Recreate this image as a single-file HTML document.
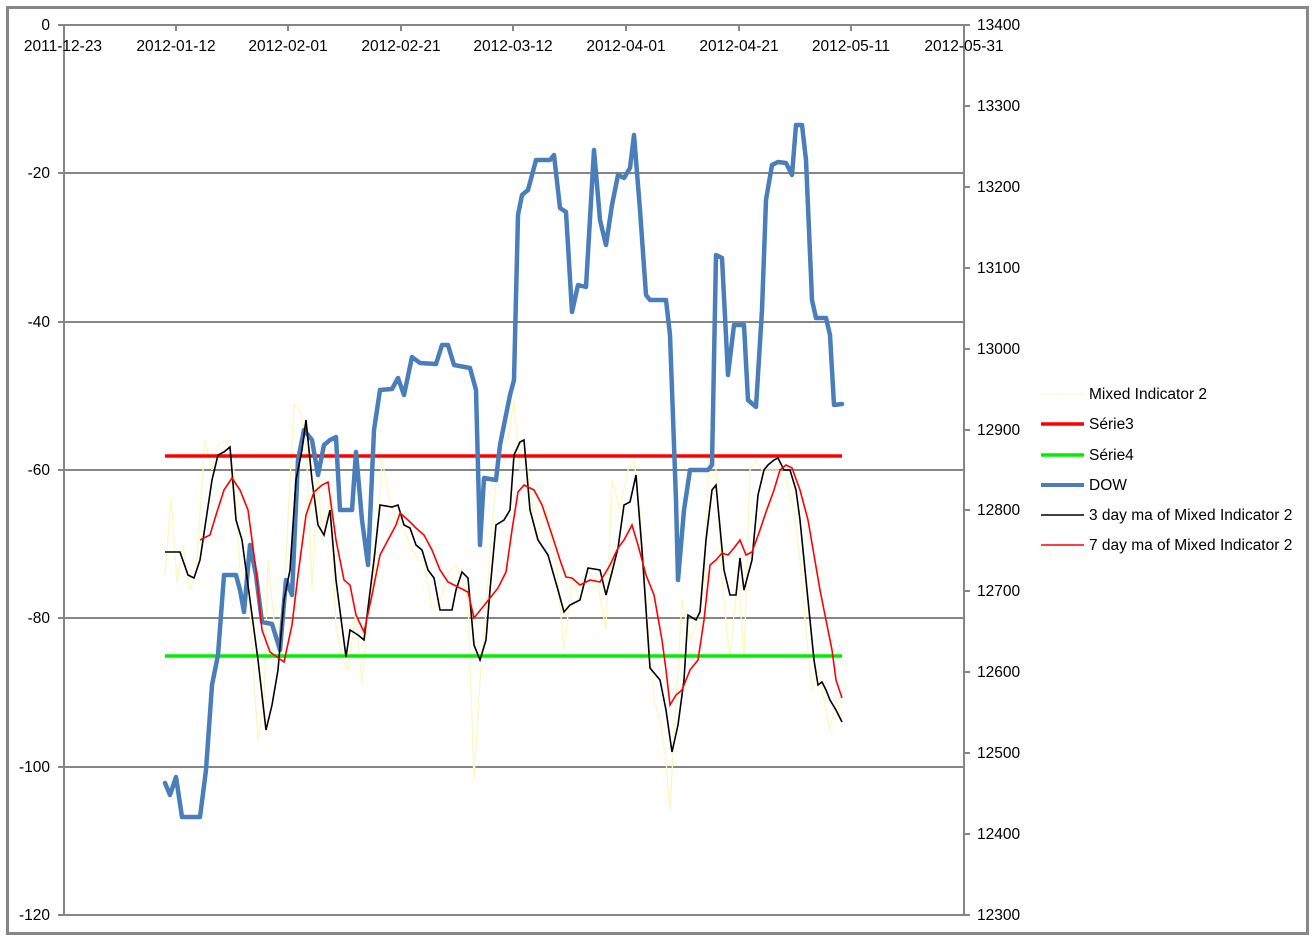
<!DOCTYPE html>
<html><head><meta charset="utf-8"><style>
html,body{margin:0;padding:0;background:#fff;}
svg{display:block;}
text{font-family:"Liberation Sans",sans-serif;font-size:15.5px;fill:#000;}
</style></head><body>
<svg width="1314" height="941" viewBox="0 0 1314 941">
<rect x="7.5" y="7.5" width="1300" height="926" fill="#fff" stroke="#868686" stroke-width="3"/>
<g stroke="#868686" stroke-width="2" fill="none">
<line x1="58" y1="25" x2="964" y2="25"/>
<line x1="58" y1="173" x2="964" y2="173"/>
<line x1="58" y1="322" x2="964" y2="322"/>
<line x1="58" y1="470" x2="964" y2="470"/>
<line x1="58" y1="618" x2="964" y2="618"/>
<line x1="58" y1="767" x2="964" y2="767"/>
<line x1="58" y1="915" x2="964" y2="915"/>
<line x1="64" y1="25" x2="64" y2="915"/>
<line x1="964" y1="25" x2="964" y2="915"/>
<line x1="176" y1="25" x2="176" y2="31"/><line x1="288" y1="25" x2="288" y2="31"/><line x1="401" y1="25" x2="401" y2="31"/><line x1="513" y1="25" x2="513" y2="31"/><line x1="626" y1="25" x2="626" y2="31"/><line x1="739" y1="25" x2="739" y2="31"/><line x1="851" y1="25" x2="851" y2="31"/>
<line x1="964" y1="25" x2="970" y2="25"/><line x1="964" y1="106" x2="970" y2="106"/><line x1="964" y1="187" x2="970" y2="187"/><line x1="964" y1="268" x2="970" y2="268"/><line x1="964" y1="349" x2="970" y2="349"/><line x1="964" y1="430" x2="970" y2="430"/><line x1="964" y1="510" x2="970" y2="510"/><line x1="964" y1="591" x2="970" y2="591"/><line x1="964" y1="672" x2="970" y2="672"/><line x1="964" y1="753" x2="970" y2="753"/><line x1="964" y1="834" x2="970" y2="834"/><line x1="964" y1="915" x2="970" y2="915"/>
</g>
<g text-anchor="end">
<text x="50" y="30">0</text><text x="50" y="178">-20</text><text x="50" y="327">-40</text><text x="50" y="475">-60</text><text x="50" y="623">-80</text><text x="50" y="772">-100</text><text x="50" y="920">-120</text>
</g>
<g>
<text x="977" y="30">13400</text><text x="977" y="111">13300</text><text x="977" y="192">13200</text><text x="977" y="273">13100</text><text x="977" y="354">13000</text><text x="977" y="435">12900</text><text x="977" y="515">12800</text><text x="977" y="596">12700</text><text x="977" y="677">12600</text><text x="977" y="758">12500</text><text x="977" y="839">12400</text><text x="977" y="920">12300</text>
</g>
<g text-anchor="middle">
<text x="63" y="51">2011-12-23</text><text x="176" y="51">2012-01-12</text><text x="288" y="51">2012-02-01</text><text x="401" y="51">2012-02-21</text><text x="513" y="51">2012-03-12</text><text x="626" y="51">2012-04-01</text><text x="739" y="51">2012-04-21</text><text x="851" y="51">2012-05-11</text><text x="964" y="51">2012-05-31</text>
</g>
<polyline fill="none" stroke="#fbf8c0" stroke-width="1.3" points="165,575 171,498 177,582 183,545 190,590 196,573 205,440 212,470 218,445 226,440 234,470 240,570 248,580 254,680 258,740 264,700 268,560 276,640 284,600 290,480 294,405 300,410 306,440 312,590 318,470 322,540 330,500 336,625 342,660 348,670 356,612 362,685 368,610 374,575 382,460 390,500 396,520 404,530 410,545 418,560 424,560 432,610 440,600 450,570 456,565 462,580 468,600 474,780 480,680 486,610 494,500 500,450 508,440 514,400 520,470 528,470 536,540 546,510 556,560 564,650 572,580 580,600 588,570 598,585 606,630 612,480 620,510 628,470 634,460 640,510 646,600 654,700 660,720 666,760 670,810 676,700 682,600 690,640 696,625 704,590 710,430 716,470 722,580 730,660 738,570 744,660 750,470 756,460 762,470 770,470 778,470 786,480 794,510 800,560 806,630 812,690 818,670 824,700 830,730 836,700 842,720"/>
<line x1="165" y1="456" x2="842" y2="456" stroke="#ff0000" stroke-width="3.5"/>
<line x1="165" y1="656" x2="842" y2="656" stroke="#00ee00" stroke-width="3.5"/>
<polyline fill="none" stroke="#4a7ebb" stroke-width="4.5" stroke-linejoin="round" stroke-linecap="round" points="165,783 170,795 176,777 182,817 200,817 206,770 212,685 218,655 224,575 236,575 240,590 244,612 250,545 256,575 262,622 272,624 280,650 286,580 292,595 298,460 304,430 312,440 318,475 324,445 330,440 336,437 340,510 352,510 356,452 362,520 368,565 374,430 380,390 392,389 398,378 404,395 412,357 420,363 436,364 442,345 448,345 454,365 470,368 476,390 480,545 484,478 496,480 500,445 510,395 514,380 518,215 522,195 528,190 536,160 550,160 554,155 560,208 566,212 572,312 578,285 586,287 594,150 600,220 606,245 612,205 618,175 624,178 630,168 634,135 640,210 646,295 650,300 666,300 670,335 676,500 678,580 684,510 690,470 700,470 708,470 712,465 716,255 722,258 728,375 734,325 744,325 748,400 756,407 762,310 766,200 772,165 778,162 786,163 792,175 796,125 802,125 806,160 812,300 816,318 826,318 830,335 834,405 842,404"/>
<polyline fill="none" stroke="#000" stroke-width="1.6" points="165,552 180,552 188,575 194,578 200,560 206,520 212,480 218,455 224,452 230,447 236,520 242,540 250,600 258,660 266,730 272,705 278,670 284,600 290,570 296,480 302,450 306,420 312,480 318,525 324,535 330,510 336,580 346,657 350,630 358,635 364,640 374,560 380,505 392,507 398,505 404,525 410,528 416,545 422,550 428,570 434,578 440,610 452,610 456,590 462,572 468,578 474,645 480,660 486,640 490,590 496,525 504,520 510,510 514,455 520,442 524,440 530,510 538,540 548,555 558,590 564,612 570,605 580,600 588,568 600,570 606,595 612,572 618,548 624,505 630,502 636,475 642,550 650,668 660,680 666,710 672,752 678,725 684,680 688,615 696,620 700,612 706,540 712,490 716,485 724,570 730,595 736,595 740,558 744,590 752,560 758,495 764,470 768,465 774,460 778,458 784,470 790,470 796,490 800,520 808,600 814,660 818,685 822,682 826,690 830,700 836,710 842,722"/>
<polyline fill="none" stroke="#ff0000" stroke-width="1.6" points="200,540 210,535 216,515 224,490 232,478 240,490 248,510 256,570 262,630 270,652 284,662 292,625 298,575 306,515 314,492 322,485 328,482 336,540 344,580 350,585 356,615 364,632 372,595 380,555 388,540 396,525 400,513 408,520 416,528 424,535 432,550 440,570 448,582 458,587 468,592 474,618 482,608 490,598 498,588 506,572 512,530 518,492 524,485 534,490 542,505 552,535 560,560 566,577 572,578 580,585 590,580 600,582 610,565 618,548 624,540 632,525 638,545 646,575 654,595 662,640 666,670 670,705 676,695 682,690 690,670 698,660 704,620 710,565 716,560 722,553 728,555 734,548 740,540 746,555 752,552 760,530 766,512 774,490 780,470 786,465 792,468 800,490 808,520 814,555 820,590 826,620 832,650 836,680 842,698"/>
<g>
<line x1="1041" y1="394" x2="1084" y2="394" stroke="#fbf8c0" stroke-width="1.5" stroke-dasharray="2,1"/>
<line x1="1041" y1="424" x2="1084" y2="424" stroke="#ff0000" stroke-width="3.5"/>
<line x1="1041" y1="455" x2="1084" y2="455" stroke="#00ee00" stroke-width="3.5"/>
<line x1="1041" y1="485" x2="1084" y2="485" stroke="#4a7ebb" stroke-width="4"/>
<line x1="1041" y1="515" x2="1084" y2="515" stroke="#000" stroke-width="1.6"/>
<line x1="1041" y1="545" x2="1084" y2="545" stroke="#ff0000" stroke-width="1.6"/>
<text x="1089" y="399">Mixed Indicator 2</text>
<text x="1089" y="429">Série3</text>
<text x="1089" y="460">Série4</text>
<text x="1089" y="490">DOW</text>
<text x="1089" y="520">3 day ma of Mixed Indicator 2</text>
<text x="1089" y="550">7 day ma of Mixed Indicator 2</text>
</g>
</svg>
</body></html>
